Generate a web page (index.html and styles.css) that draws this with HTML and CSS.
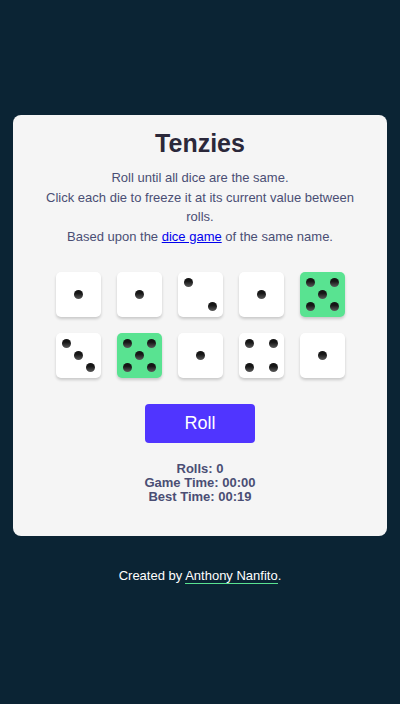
FILE: index.html
```html
<!DOCTYPE html>
<html lang="en">
<head>
<meta charset="utf-8">
<title>Tenzies</title>
<link rel="stylesheet" href="styles.css">
</head>
<body>
<div class="page">
  <main class="card">
    <h1 class="title">Tenzies</h1>
    <div class="instructions">
      <p>Roll until all dice are the same.</p>
      <p>Click each die to freeze it at its current value between rolls.</p>
      <p>Based upon the <a href="#" class="link">dice game</a> of the same name.</p>
    </div>
    <div class="dice">
      <div class="die"><span class="dot c2 r2"></span></div>
      <div class="die"><span class="dot c2 r2"></span></div>
      <div class="die"><span class="dot c1 r1"></span><span class="dot c3 r3"></span></div>
      <div class="die"><span class="dot c2 r2"></span></div>
      <div class="die held"><span class="dot c1 r1"></span><span class="dot c3 r1"></span><span class="dot c2 r2"></span><span class="dot c1 r3"></span><span class="dot c3 r3"></span></div>
      <div class="die"><span class="dot c1 r1"></span><span class="dot c2 r2"></span><span class="dot c3 r3"></span></div>
      <div class="die held"><span class="dot c1 r1"></span><span class="dot c3 r1"></span><span class="dot c2 r2"></span><span class="dot c1 r3"></span><span class="dot c3 r3"></span></div>
      <div class="die"><span class="dot c2 r2"></span></div>
      <div class="die"><span class="dot c1 r1"></span><span class="dot c3 r1"></span><span class="dot c1 r3"></span><span class="dot c3 r3"></span></div>
      <div class="die"><span class="dot c2 r2"></span></div>
    </div>
    <button class="roll">Roll</button>
    <div class="stats">
      <div>Rolls: 0</div>
      <div>Game Time: 00:00</div>
      <div>Best Time: 00:19</div>
    </div>
  </main>
  <footer class="footer">Created by <a href="#" class="author">Anthony Nanfito</a>.</footer>
</div>
</body>
</html>
```

FILE: styles.css
```css
* { box-sizing: border-box; }
html, body { margin: 0; padding: 0; }
body {
  background: #0b2434;
  font-family: "Liberation Sans", Arial, sans-serif;
}
.page {
  min-height: 704px;
  display: flex;
  flex-direction: column;
  align-items: center;
  padding: 115px 13px 0;
}
.card {
  width: 100%;
  background: #f5f5f5;
  border-radius: 8px;
  padding: 14px 24px 32px;
  display: flex;
  flex-direction: column;
  align-items: center;
}
.title {
  margin: 0;
  font-size: 25px;
  line-height: 29px;
  font-weight: 700;
  color: #2b283a;
}
.instructions {
  margin-top: 10px;
  text-align: center;
  color: #4a4e74;
  font-size: 13px;
  line-height: 19.5px;
}
.instructions p { margin: 0; }
.link { color: #0000ee; text-decoration: underline; }
.dice {
  margin-top: 26px;
  display: grid;
  grid-template-columns: repeat(5, 45px);
  grid-auto-rows: 45px;
  gap: 16px;
}
.die {
  background: #ffffff;
  border-radius: 5px;
  box-shadow: 0 2px 3px rgba(0, 0, 0, 0.18);
  display: grid;
  grid-template-columns: repeat(3, 12px);
  grid-template-rows: repeat(3, 12px);
  padding: 4.5px;
  place-items: center;
}
.die.held { background: #59e391; }
.dot {
  width: 9px;
  height: 9px;
  border-radius: 50%;
  background: linear-gradient(to bottom, #151515 35%, #5a5a5a 100%);
}
.c1 { grid-column: 1; }
.c2 { grid-column: 2; }
.c3 { grid-column: 3; }
.r1 { grid-row: 1; }
.r2 { grid-row: 2; }
.r3 { grid-row: 3; }
.roll {
  margin-top: 26px;
  width: 110px;
  height: 39px;
  border: none;
  border-radius: 4px;
  background: #5035ff;
  color: #ffffff;
  font-family: "Liberation Sans", Arial, sans-serif;
  font-size: 18px;
}
.stats {
  margin-top: 19px;
  text-align: center;
  color: #4a4e74;
  font-size: 13px;
  line-height: 14px;
  font-weight: 700;
}
.footer {
  margin-top: 32px;
  color: #ffffff;
  font-size: 13px;
  line-height: 15px;
}
.author {
  color: #ffffff;
  text-decoration: none;
  border-bottom: 1px solid #59e391;
}
```
